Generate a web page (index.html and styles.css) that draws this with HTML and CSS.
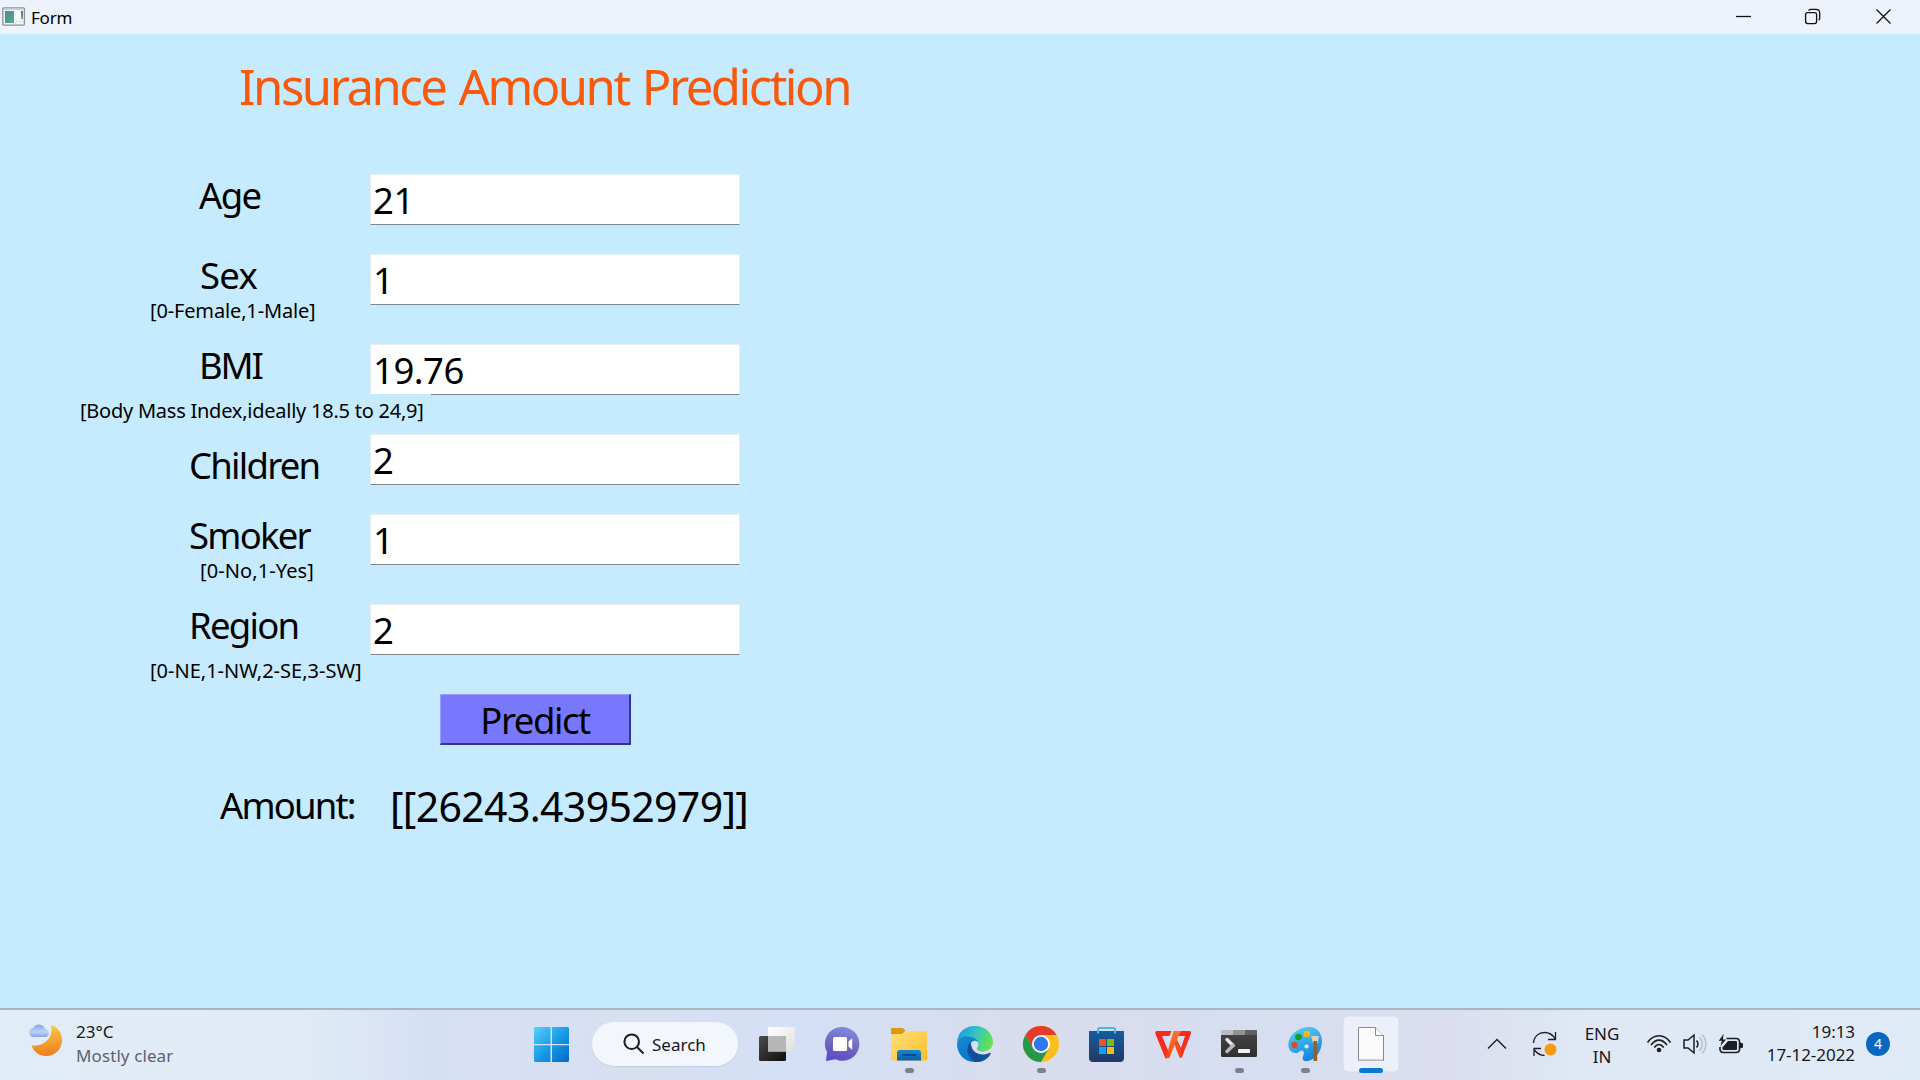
FILE: index.html
```html
<!DOCTYPE html>
<html lang="en">
<head>
<meta charset="utf-8">
<title>Form</title>
<link rel="stylesheet" href="styles.css">
</head>
<body>
<header class="titlebar">
  <svg class="app-icon" width="24" height="20" viewBox="0 0 24 20"><defs><linearGradient id="scr" x2="1" y2="1"><stop stop-color="#4c87a5"/><stop offset="1" stop-color="#55b07c"/></linearGradient><linearGradient id="scr2" x2="0" y2="1"><stop stop-color="#4c7890"/><stop offset="1" stop-color="#72b090"/></linearGradient></defs><rect x=".8" y=".8" width="21.6" height="17.4" rx="1" fill="#f2f3f3" stroke="#8d9196" stroke-width="1.3"/><path d="M2 2.3h19" stroke="#c5cacf"/><rect x="3" y="4" width="9" height="12" fill="url(#scr)"/><rect x="14" y="4" width="4" height="8" fill="#fff"/><rect x="19" y="4" width="2" height="8" fill="url(#scr2)"/><path d="M14 14.5h7" stroke="#dde0e2"/></svg>
  <span class="caption">Form</span>
  <svg class="window-buttons" width="180" height="34" viewBox="0 0 180 34" fill="none" stroke="#111" stroke-width="1.3"><path d="M-4 16.5h15"/><rect x="65.600" y="12.600" width="11" height="11" rx="2"/><path d="M68.500 10.500q1-1.200 2.500-1.200h5q3.700 0 3.700 3.700v5q0 1.400-1 2.300"/><path d="M136.500 9.500l14 14m0-14l-14 14"/></svg>
</header>
<main class="form">
  <h1 class="title">Insurance Amount Prediction</h1>
  <div class="row short">
    <div class="caption-cell"><label class="label wide-indent age">Age</label></div>
    <div class="field">21</div>
  </div>
  <div class="row">
    <div class="caption-cell"><label class="label wide-indent sex">Sex</label><small class="hint sex-hint">[0-Female,1-Male]</small></div>
    <div class="field">1</div>
  </div>
  <div class="row">
    <div class="caption-cell"><label class="label wide-indent bmi">BMI</label><small class="hint bmi-hint">[Body Mass Index,ideally 18.5 to 24,9]</small></div>
    <div class="field">19.76</div>
  </div>
  <div class="row short">
    <div class="caption-cell"><label class="label children">Children</label></div>
    <div class="field">2</div>
  </div>
  <div class="row">
    <div class="caption-cell"><label class="label smoker">Smoker</label><small class="hint smoker-hint">[0-No,1-Yes]</small></div>
    <div class="field">1</div>
  </div>
  <div class="row">
    <div class="caption-cell"><label class="label region">Region</label><small class="hint region-hint">[0-NE,1-NW,2-SE,3-SW]</small></div>
    <div class="field">2</div>
  </div>
  <button class="predict" type="button">Predict</button>
  <div class="result"><span class="amount-label">Amount:</span><output class="amount">[[26243.43952979]]</output></div>
</main>
<footer class="taskbar">
  <div class="weather">
    <svg width="36" height="36" viewBox="0 0 36 36"><defs><linearGradient id="moon" x2="0" y2="1"><stop stop-color="#f7c64a"/><stop offset="1" stop-color="#f07d1c"/></linearGradient><linearGradient id="cloud" x2="0" y2="1"><stop stop-color="#86a6e4"/><stop offset=".6" stop-color="#bdd2f8"/><stop offset="1" stop-color="#83a3e4"/></linearGradient></defs><path d="M24 3C31 5 35 11 35 18.500 35 27 28 34 19.500 34 12 34 7 30 4.500 23.500 18 25 27 15 24 3z" fill="url(#moon)"/><path d="M6 15a4.600 4.600 0 0 1 0-9 6.500 6.500 0 0 1 12 1 4.200 4.200 0 0 1 1 8z" fill="url(#cloud)"/></svg>
    <div class="weather-text"><div class="temp">23°C</div><div class="sky">Mostly clear</div></div>
  </div>
  <div class="apps">
    <svg class="app" viewBox="0 0 66 70"><defs><linearGradient id="win" gradientUnits="userSpaceOnUse" x1="16" y1="17" x2="51" y2="52"><stop stop-color="#58d1fb"/><stop offset=".5" stop-color="#1a9be6"/><stop offset="1" stop-color="#0169c7"/></linearGradient></defs><path d="M17.500 17H32.500V34H16V18.500q0-1.500 1.500-1.500zM34 17h15.500q1.500 0 1.500 1.500V34H34zM16 35.300h16.500V52h-15q-1.500 0-1.500-1.500zM34 35.300h17V50.500q0 1.500-1.500 1.500H34z" fill="url(#win)"/></svg>
    <div class="search"><svg width="22" height="22" viewBox="0 0 22 22" fill="none" stroke="#1c1e22" stroke-width="2"><circle cx="8.700" cy="8.700" r="7.300"/><path d="M14 14l6.500 6.500"/></svg><span>Search</span></div>
    <svg class="app" viewBox="0 0 66 70"><defs><linearGradient id="tv" x2="1" y2="1"><stop stop-color="#4b4b4b"/><stop offset="1" stop-color="#0e0e0e"/></linearGradient><linearGradient id="tw" x2="1" y2="1"><stop stop-color="#fff"/><stop offset="1" stop-color="#dedede"/></linearGradient></defs><rect x="16" y="26" width="27" height="25" rx="1.500" fill="url(#tv)"/><rect x="25" y="17" width="27" height="24.500" rx="1" fill="url(#tw)"/><path d="M25 26h18v15.500H25z" fill="#b7b7b7"/></svg>
    <svg class="app" viewBox="0 0 66 70"><defs><linearGradient id="chat" x1=".8" y1="0" x2=".5" y2="1"><stop stop-color="#7c91e4"/><stop offset=".55" stop-color="#7667bb"/><stop offset="1" stop-color="#5b4fc9"/></linearGradient></defs><path d="M33.500 17a16.900 16.900 0 1 1-7 32.300L17 51l1-9A16.900 16.900 0 0 1 33.500 17z" fill="url(#chat)"/><rect x="24" y="27" width="14" height="14" rx="1.500" fill="#fff"/><path d="M39.500 31.500l3.700-3.200v11.500l-3.700-3.200z" fill="#fff"/></svg>
    <svg class="app" viewBox="0 0 66 70"><defs><linearGradient id="fol" x2="1" y2="1"><stop stop-color="#ffe07a"/><stop offset="1" stop-color="#f9bf29"/></linearGradient><linearGradient id="folb" x2="0" y2="1"><stop stop-color="#1785d4"/><stop offset="1" stop-color="#0b5ea8"/></linearGradient></defs><path d="M16 19q0-1 1-1h11l3 3h-1l-3 3H16z" fill="#d99a0c"/><path d="M16 24h12l3-3h20q1 0 1 1v28.500H16z" fill="url(#fol)"/><path d="M22 50.500V43q0-3 3-3h18q3 0 3 3v7.500z" fill="url(#folb)"/><path d="M27 45h14" stroke="#08417d" stroke-width="1.500"/><rect class="dot" x="30" y="58" width="9" height="5" rx="2.500"/></svg>
    <svg class="app" viewBox="0 0 66 70"><defs><linearGradient id="e1" x1="0" y1=".2" x2="1" y2=".5"><stop stop-color="#189bdc"/><stop offset=".45" stop-color="#30c0cd"/><stop offset="1" stop-color="#67e34c"/></linearGradient><linearGradient id="e2" x1=".1" x2=".5" y2="1"><stop stop-color="#1689cf"/><stop offset="1" stop-color="#0874d0"/></linearGradient></defs><path d="M16 32C17 22 24 16 34 16c11 0 18 8 18 16 0 6-5 9.500-10 9.500-4 0-7-1.500-6-3.500 3-3 1-8-4-9-7-2-14-1-16 3z" fill="url(#e1)"/><path d="M16 34c1-7 8-9 14-7 4 1 6 2.500 7.500 4.500-4-2-8-.5-8 4.500 0 7 6 13 13 12.500C39 51 37 52 33 52 23 52 16 43.500 16 34z" fill="url(#e2)"/><path d="M28.500 33C24 39 27 49 34.500 52c7 .5 12.500-3 15-8 .4-1.200-.4-1.600-1.300-1C41 46.500 31 44 30 34z" fill="#124f98"/></svg>
    <svg class="app" viewBox="0 0 66 70"><circle cx="34" cy="34" r="18" fill="#fbbf1d"/><path d="M18.400 25A18 18 0 0 1 49.600 25H34l-7.800 13.500z" fill="#e33b2e"/><path d="M18.400 25A18 18 0 0 0 34 52l7.800-13.500L34 43l-7.800-4.500z" fill="#24994a"/><circle cx="34" cy="34" r="9" fill="#fff"/><circle cx="34" cy="34" r="7.200" fill="#2f78ea"/><rect class="dot" x="30" y="58" width="9" height="5" rx="2.500"/></svg>
    <svg class="app" viewBox="0 0 66 70"><defs><linearGradient id="sto" x2="0" y2="1"><stop stop-color="#155d9f"/><stop offset="1" stop-color="#213a66"/></linearGradient></defs><path d="M25 23v-3.500q0-1.500 1.500-1.500h14q1.500 0 1.500 1.500V23" fill="none" stroke="#46bbe6" stroke-width="2"/><path d="M16 21h35v27q0 4-4 4H20q-4 0-4-4z" fill="url(#sto)"/><path d="M25 21v2.500M42 21v2.500" stroke="#46bbe6" stroke-width="2"/><path d="M26 29h7v7h-7z" fill="#f05125"/><path d="M34 29h7v7h-7z" fill="#80bb07"/><path d="M26 37h7v7h-7z" fill="#0ea5ed"/><path d="M34 37h7v7h-7z" fill="#fdb913"/></svg>
    <svg class="app" viewBox="0 0 66 70"><defs><linearGradient id="w1" x2="1" y2="1"><stop stop-color="#ff2020"/><stop offset="1" stop-color="#ed3b16"/></linearGradient><linearGradient id="w2" x2="0" y2="1"><stop stop-color="#fb7331"/><stop offset="1" stop-color="#fa4d10"/></linearGradient></defs><path d="M18 21h14.500l-2 5H23l5 12 2.500 5-2.300 5q-1 1-2 0L16.500 24q-1-3 1.500-3z" fill="url(#w1)"/><path d="M40 21h10q3 0 1.800 3L43 47q-1.200 2-2.500 0L36.500 37l2-6 3.500 7 4-12h-8z" fill="url(#w1)"/><path d="M34.500 21H42l-3 6-8.500 20.500q-1.500 1.500-3.500-.5z" fill="url(#w2)"/><path d="M35.500 34l2.500-5 4 12-1 6.500z" fill="#fa4d14"/></svg>
    <svg class="app" viewBox="0 0 66 70"><defs><linearGradient id="ter" x2="0" y2="1"><stop stop-color="#464646"/><stop offset="1" stop-color="#303030"/></linearGradient></defs><rect x="16" y="20" width="36" height="27" rx="1.500" fill="url(#ter)"/><path d="M16 25v-4q0-1 1-1h11v5z" fill="#bcbcbc"/><path d="M28 20h12v5H28z" fill="#929292"/><path d="M40 20h11q1 0 1 1v4H40z" fill="#606060"/><path d="M22 29.500l6 6" stroke="#e2e2e2" stroke-width="3.500" stroke-linecap="round"/><path d="M28 35.500l-6 6" stroke="#b9b9b9" stroke-width="3.500" stroke-linecap="round"/><rect x="33" y="39" width="12" height="4" rx=".7" fill="#f1f1f1"/><rect class="dot" x="30" y="58" width="9" height="5" rx="2.500"/></svg>
    <svg class="app" viewBox="0 0 66 70"><defs><linearGradient id="pal" x2=".4" y2="1"><stop stop-color="#5dd2f8"/><stop offset="1" stop-color="#1787dd"/></linearGradient></defs><path d="M38 17c8 0 13 6 13 14 0 10-7 19-14 20-6 1-6-3-4.500-6s-1-6-4-3.500c-2 2-5 2-7.500.5-4-3-4.500-8-2.500-13 3-7 11-12 19.500-12z" fill="url(#pal)"/><circle cx="36" cy="24" r="3.300" fill="#fbb716"/><circle cx="27.500" cy="27" r="3.300" fill="#129c29"/><circle cx="23.500" cy="35" r="3.200" fill="#dc4f22"/><circle cx="35.500" cy="36.500" r="2" fill="#e4f6ff"/><path d="M40 26h8l-1.500 7h-4.500z" fill="#e8cfae"/><path d="M42.500 31h3.500l.2 20h-3.700z" fill="#8f6030"/><rect class="dot" x="30" y="58" width="9" height="5" rx="2.500"/></svg>
    <svg class="app" viewBox="0 0 66 70"><rect x="6" y="6" width="56" height="56" rx="5" fill="#ecf0fa" stroke="#d5dbe9"/><path d="M21.500 17.500h17l8 8v25h-25z" fill="#fafafa" stroke="#8d8888"/><path d="M38.500 17.500v8h8" fill="#fff" stroke="#8d8888"/><path d="M22 50h24" stroke="#c7c7c7" stroke-width="1.500"/><rect x="22" y="58" width="24" height="5" rx="2.500" fill="#0b78d4"/></svg>
  </div>
  <div class="tray">
    <svg class="chevron" width="20" height="12" viewBox="0 0 20 12" fill="none" stroke="#222" stroke-width="1.500"><path d="M1 10.500L10 1.500l9 9"/></svg>
    <svg class="sync" width="26" height="26" viewBox="0 0 26 26" fill="none" stroke="#1c1e22" stroke-width="1.300"><path d="M1.500 12C2 5 7 1.500 12.500 1.500c4.500 0 8 2 10.500 6M23.500 1v7.500H16M9 17.500H2V25M2 18.500c3 4 6 6 10.500 6"/><circle cx="18.500" cy="18.500" r="6" fill="#fb9a0a" stroke="none"/></svg>
    <div class="lang">ENG<br>IN</div>
    <svg class="wifi" width="26" height="20" viewBox="0 0 26 20" fill="none" stroke="#1c1e22" stroke-width="1.700"><path d="M1.500 8.500C8-.5 18-.5 24.500 8.500M5 11C10 4.500 16 4.500 21 11M8.300 13.500c3-4 6.400-4 9.400 0"/><circle cx="13" cy="16" r="2.300" fill="#1c1e22" stroke="none"/></svg>
    <svg class="volume" width="26" height="22" viewBox="0 0 26 22" fill="none" stroke="#1c1e22" stroke-width="1.500"><path d="M2 7h4l6-5v18l-6-5H2zM14.500 7.500q3 3.500 0 7"/><path d="M17.500 4q5.500 7 0 14M20.500 1.500q7 9.500 0 19" stroke="#b5c0cc"/></svg>
    <svg class="battery" width="26" height="20" viewBox="0 0 26 20" fill="none" stroke="#1c1e22" stroke-width="1.600"><path d="M8.500 4.500H18q3.500 0 3.500 3.500v7q0 3.500-3.500 3.500H5.500Q2 18.500 2 15v-2"/><path d="M10 7h8q1 0 1 1v7q0 1-1 1H5.500q-1 0-1-1v-1.500zM22 8.500l3 1v4l-3 1zM5.500 0L.8 6.800h3L2.500 12 8 5.500H5z" fill="#1c1e22" stroke="none"/></svg>
    <div class="clock">19:13<br>17-12-2022</div>
    <div class="badge">4</div>
  </div>
</footer>
</body>
</html>
```
FILE: styles.css
```css
* { box-sizing: border-box; }
body {
  margin: 0;
  width: 1920px;
  height: 1080px;
  overflow: hidden;
  display: flex;
  flex-direction: column;
  background: #c6ebff;
  color: #000;
  font-family: "Noto Sans", sans-serif;
}
svg { display: block; flex: none; overflow: visible; }

.titlebar {
  flex: none;
  height: 34px;
  display: flex;
  align-items: center;
  background: #eef3fb;
  padding-left: 2px;
}
.caption { margin-left: 5px; font-size: 17px; line-height: 34px; padding-top: 1px; letter-spacing: -.2px; }
.window-buttons { margin-left: auto; }

.form { flex: 1; white-space: nowrap; }
.title {
  margin: 0;
  height: 136px;
  padding: 17px 0 0 239px;
  font-size: 49px;
  font-weight: 400;
  line-height: 70px;
  letter-spacing: -2.500px;
  word-spacing: 3px;
  color: #f9590b;
}
.row { display: grid; grid-template-columns: 370px 370px; height: 90px; }
.row.short { height: 80px; }
.caption-cell { min-width: 0; }
.label { display: block; height: 50px; font-size: 36.500px; line-height: 50px; padding-left: 189px; letter-spacing: -1.750px; }
.wide-indent { padding-left: 199px; }
.age { letter-spacing: -1.600px; }
.sex { letter-spacing: -.7px; padding-left: 200px; }
.bmi { letter-spacing: -2.200px; }
.children { height: 60px; padding-top: 13px; line-height: 44px; }
.hint { display: block; width: max-content; height: 20px; font-size: 20px; line-height: 22px; letter-spacing: -.15px; }
.sex-hint { margin-left: 150px; }
.bmi-hint { position: relative; margin: 4px 0 0 80px; width: 351px; height: 32px; line-height: 34px; letter-spacing: -.24px; background: #c6ebff; }
.smoker-hint { margin-left: 200px; letter-spacing: .1px; }
.region-hint { margin: 10px 0 0 150px; letter-spacing: 0; }
.field {
  height: 51px;
  margin-top: 4px;
  padding-left: 2px;
  background: #fff;
  border: 1px solid #e6eef4;
  border-bottom-color: #80868c;
  font-size: 36.500px;
  line-height: 50px;
  letter-spacing: -.5px;
}
.predict {
  display: block;
  width: 191px;
  height: 51px;
  margin: 4px 0 0 440px;
  padding: 3px 0 0;
  border: solid;
  border-width: 1px 2px 2px 1px;
  border-color: #9c9cff #35358a #35358a #9c9cff;
  background: #7878ff;
  color: #000;
  font: 36.500px/45px "Noto Sans", sans-serif;
  letter-spacing: -1.450px;
}
.result { display: flex; padding: 35px 0 0 220px; }
.amount-label { width: 170px; font-size: 36.500px; line-height: 50px; letter-spacing: -1.850px; }
.amount { font-size: 41px; line-height: 53px; letter-spacing: -.65px; }

.taskbar {
  flex: none;
  display: flex;
  height: 72px;
  border-top: 2px solid #a8b5c3;
  background: linear-gradient(90deg, #e0ecf6 0, #e0ebf6 300px, #d6e0f5 430px, #d8dff1 640px, #d3e0f6 800px, #d9dced 1040px, #d6def1 1250px, #dbddee 1440px, #dfe8f4 1580px, #dfebf7 100%);
  color: #15181c;
}
.weather { width: 518px; display: flex; padding: 12px 0 0 27px; font-size: 17px; line-height: 24px; }
.weather-text { margin: -2px 0 0 13px; }
.sky { color: #5b6370; letter-spacing: .1px; }
.apps { display: flex; }
.app { width: 66px; height: 70px; }
.dot { fill: #7c828c; }
.search {
  display: flex;
  align-items: center;
  width: 146px;
  height: 44px;
  margin: 12px 5px 0 8px;
  padding-left: 31px;
  border-radius: 22px;
  background: #f3f6fc;
  box-shadow: 0 1px 1px #c5cde0;
  font-size: 17px;
}
.search span { margin-left: 7px; }
.tray { flex: 1; display: flex; align-items: center; padding: 0 30px 2px 84px; font-size: 17px; line-height: 23px; }
.sync { margin-left: 25px; }
.lang { width: 40px; margin: 1px 0 0 24px; text-align: center; }
.wifi { margin-left: 24px; }
.volume { margin-left: 10px; }
.battery { margin-left: 10px; }
.clock { margin: -2px 0 0 auto; text-align: right; letter-spacing: -.05px; }
.badge { width: 24px; height: 24px; margin-left: 11px; border-radius: 50%; background: #0867c0; color: #fff; font-size: 14px; line-height: 24px; text-align: center; }
```
